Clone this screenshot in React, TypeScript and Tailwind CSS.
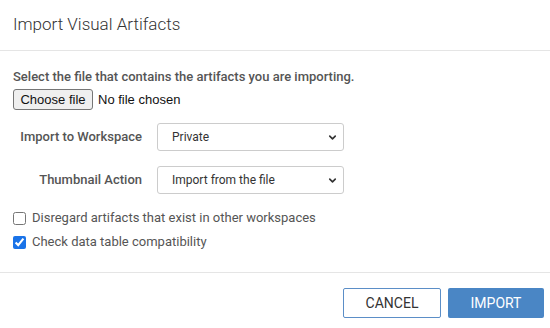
import { ChevronDown } from "lucide-react";

const SelectField = ({ label, value, options }: { label: string; value: string; options: string[] }) => (
  <div className="flex items-center">
    <label className="w-[129px] text-right text-[13px] font-medium text-[#555]">{label}</label>
    <div className="relative ml-[15px] w-[187px]">
      <select
        defaultValue={value}
        className="h-[28px] w-full appearance-none rounded-[3px] border border-[#ccc] bg-white pl-[14px] text-[12px] text-[#333] outline-none"
      >
        {options.map((o) => (
          <option key={o}>{o}</option>
        ))}
      </select>
      <ChevronDown className="pointer-events-none absolute right-[6px] top-[9px] text-[#333]" size={11} strokeWidth={3.5} />
    </div>
  </div>
);

const App = () => {
  return (
    <div className="h-[328px] w-[550px] bg-white font-['Roboto',sans-serif] text-[#555]">
      {/* Header */}
      <div className="flex h-[51px] items-center border-b border-[#e5e5e5] px-[13px]">
        <h2 className="text-[17px] font-light text-[#333]">Import Visual Artifacts</h2>
      </div>

      {/* Body */}
      <div className="h-[222px] border-b border-[#e5e5e5] px-[13px] pt-[16px]">
        <p className="text-[13px] font-medium leading-[20px] text-[#555]">
          Select the file that contains the artifacts you are importing.
        </p>
        <label className="mt-[2px] flex items-center gap-[5px] font-['Liberation_Sans',sans-serif] text-[13px] text-[#111]">
          <span className="flex h-[21px] w-[80px] items-center justify-center rounded-[3px] border border-[#767676] bg-[#efefef]">
            Choose file
          </span>
          No file chosen
        </label>

        <div className="mt-[13px] flex flex-col gap-[15px]">
          <SelectField label="Import to Workspace" value="Private" options={["Private", "Public"]} />
          <SelectField label="Thumbnail Action" value="Import from the file" options={["Import from the file", "Generate new"]} />
        </div>

        <div className="mt-[14px] flex flex-col gap-[4px] text-[13px] leading-[20px] text-[#555]">
          <label className="flex items-center gap-[6px]">
            <input type="checkbox" className="m-0 h-[13px] w-[13px] accent-[#1a73e8]" />
            Disregard artifacts that exist in other workspaces
          </label>
          <label className="flex items-center gap-[6px]">
            <input type="checkbox" defaultChecked className="m-0 h-[13px] w-[13px] accent-[#1a73e8]" />
            Check data table compatibility
          </label>
        </div>
      </div>

      {/* Footer */}
      <div className="flex justify-end gap-[7px] px-[6px] pt-[15px]">
        <button className="h-[30px] w-[98px] rounded-[2px] border border-[#5b8ec7] bg-white text-[14px] text-[#333]">
          CANCEL
        </button>
        <button className="h-[30px] w-[96px] rounded-[2px] bg-[#4a86c5] text-[14px] text-white">IMPORT</button>
      </div>
    </div>
  );
};

export default App;
